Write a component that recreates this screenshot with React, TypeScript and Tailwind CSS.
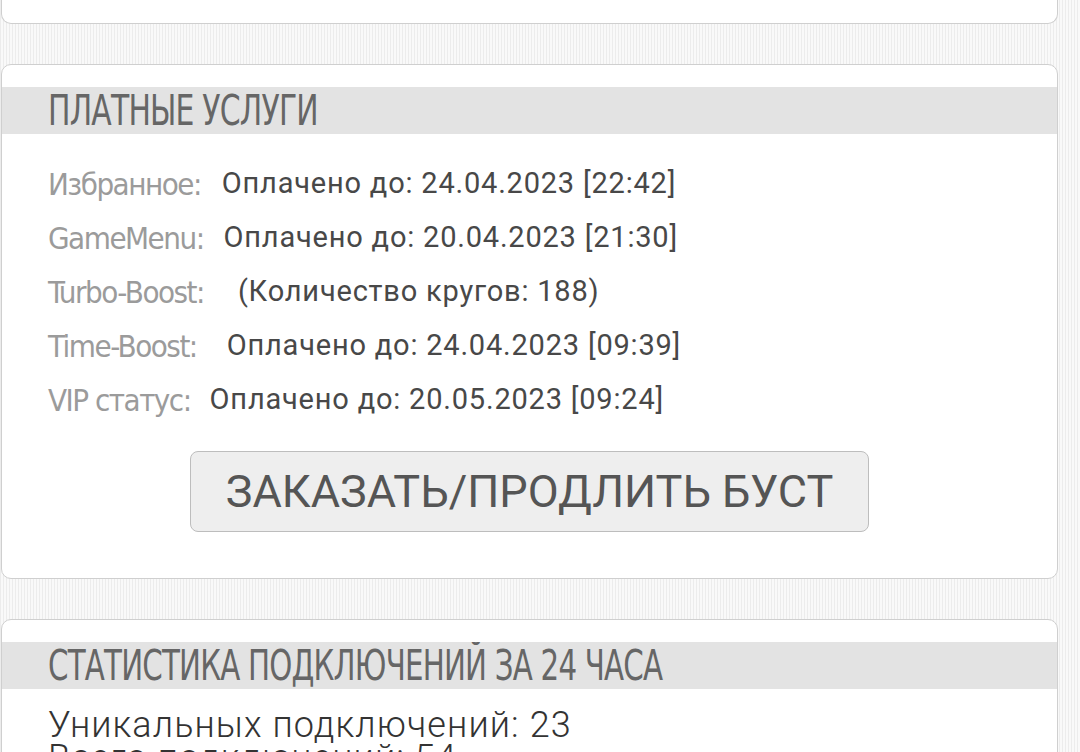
import React from "react";

const cond = { fontFamily: '"DejaVu Sans Condensed", "DejaVu Sans", sans-serif' };

function Row({ label, value, gap = "ml-[18px]" }: { label: string; value: string; gap?: string }) {
  return (
    <div className="flex items-center h-[54px] whitespace-nowrap">
      <span className="text-[31px] text-[#9b9b9b] tracking-[-1.5px]" style={cond}>
        {label}
      </span>
      <span className={`${gap} text-[29px] tracking-[0.8px] text-[#484848] font-['Roboto',sans-serif]`}>
        {value}
      </span>
    </div>
  );
}

function Header({ title, narrow }: { title: string; narrow?: boolean }) {
  return (
    <div className="h-[47px] bg-[#e3e3e3] flex items-center pl-[46px] overflow-hidden">
      <span
        className={
          narrow
            ? "inline-block text-[42px] text-[#666] tracking-[-1px] origin-left scale-x-[0.775] whitespace-nowrap"
            : "inline-block text-[42px] text-[#666] tracking-[-1px] origin-left scale-x-[0.79] whitespace-nowrap"
        }
        style={cond}
      >
        {title}
      </span>
    </div>
  );
}

export default function App() {
  return (
    <div
      className="w-[1080px] h-[752px] overflow-hidden pl-[1px] pr-[22px] bg-[repeating-linear-gradient(90deg,#ececec_0px,#ececec_1px,#f9f9f9_1px,#f9f9f9_3px)]"
      style={{ fontFamily: "Roboto, sans-serif" }}
    >
      <div className="h-[24px] bg-white border border-t-0 border-[#cfcfcf] rounded-b-[10px]" />

      <div className="mt-[40px] bg-white border border-[#cfcfcf] rounded-[10px] pt-[22px] pb-[46px]">
        <Header title="ПЛАТНЫЕ УСЛУГИ" />
        <div className="pt-[23px] pl-[46px]">
          <Row label="Избранное:" value="Оплачено до: 24.04.2023 [22:42]" gap="ml-[21px]" />
          <Row label="GameMenu:" value="Оплачено до: 20.04.2023 [21:30]" gap="ml-[20px]" />
          <Row label="Turbo-Boost:" value="(Количество кругов: 188)" gap="ml-[34px]" />
          <Row label="Time-Boost:" value="Оплачено до: 24.04.2023 [09:39]" gap="ml-[30px]" />
          <Row label="VIP статус:" value="Оплачено до: 20.05.2023 [09:24]" gap="ml-[19px]" />
        </div>
        <div className="flex justify-center mt-[24px]">
          <button className="w-[679px] h-[81px] bg-[#eeeeee] border border-[#bdbdbd] rounded-[8px] text-[45px] text-[#555] font-['Roboto',sans-serif] leading-none">
            ЗАКАЗАТЬ/ПРОДЛИТЬ БУСТ
          </button>
        </div>
      </div>

      <div className="mt-[40px] bg-white border border-[#cfcfcf] rounded-[10px] pt-[22px] pb-[20px]">
        <Header title="СТАТИСТИКА ПОДКЛЮЧЕНИЙ ЗА 24 ЧАСА" narrow />
        <div className="pl-[46px] pt-[20px] text-[36px] tracking-[1.1px] text-[#333] leading-[33px] font-light">
          <div>Уникальных подключений: 23</div>
          <div>Всего подключений: 54</div>
        </div>
      </div>
    </div>
  );
}
